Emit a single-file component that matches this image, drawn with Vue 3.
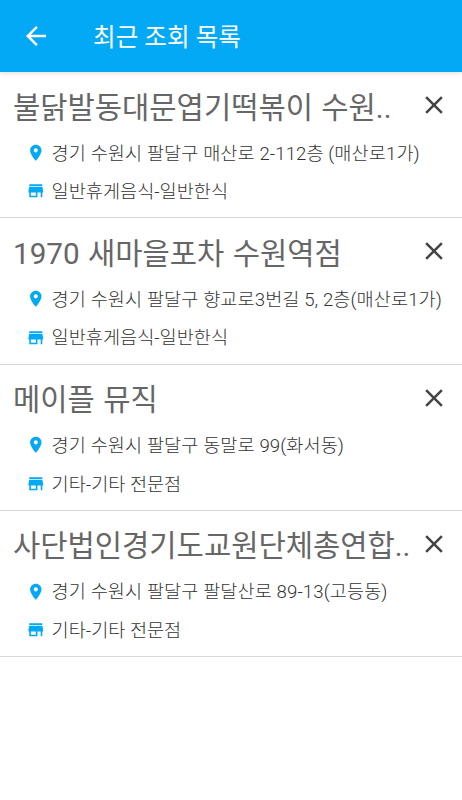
<template>
  <div class="page">
    <header class="toolbar">
      <button class="back" aria-label="뒤로">
        <svg viewBox="0 0 24 24"><path d="M20 11H7.83l5.59-5.59L12 4l-8 8 8 8 1.41-1.41L7.83 13H20v-2z"/></svg>
      </button>
      <h1>최근 조회 목록</h1>
    </header>
    <ul class="list">
      <li v-for="item in items" :key="item.id" class="item">
        <div class="head">
          <h2>{{ item.name }}</h2>
          <button class="remove" aria-label="삭제" @click="remove(item.id)">
            <svg viewBox="0 0 24 24"><path d="M19 6.41L17.59 5 12 10.59 6.41 5 5 6.41 10.59 12 5 17.59 6.41 19 12 13.41 17.59 19 19 17.59 13.41 12z"/></svg>
          </button>
        </div>
        <div class="row address">
          <svg viewBox="0 0 24 24"><path d="M12 2C8.13 2 5 5.13 5 9c0 5.25 7 13 7 13s7-7.75 7-13c0-3.87-3.13-7-7-7zm0 9.5c-1.38 0-2.5-1.12-2.5-2.5s1.12-2.5 2.5-2.5 2.5 1.12 2.5 2.5-1.12 2.5-2.5 2.5z"/></svg>
          <p>{{ item.address }}</p>
        </div>
        <div class="row">
          <svg viewBox="0 0 24 24"><path d="M20 4H4v2h16V4zm1 10v-2l-1-5H4l-1 5v2h1v6h10v-6h4v6h2v-6h1zm-9 4H6v-4h6v4z"/></svg>
          <p>{{ item.category }}</p>
        </div>
      </li>
    </ul>
  </div>
</template>

<script setup>
import {ref} from 'vue'

const items = ref([
  {id:1,name:'불닭발동대문엽기떡볶이 수원..',address:'경기 수원시 팔달구 매산로 2-112층 (매산로1가)',category:'일반휴게음식-일반한식'},
  {id:2,name:'1970 새마을포차 수원역점',address:'경기 수원시 팔달구 향교로3번길 5, 2층(매산로1가)',category:'일반휴게음식-일반한식'},
  {id:3,name:'메이플 뮤직',address:'경기 수원시 팔달구 동말로 99(화서동)',category:'기타-기타 전문점'},
  {id:4,name:'사단법인경기도교원단체총연합..',address:'경기 수원시 팔달구 팔달산로 89-13(고등동)',category:'기타-기타 전문점'}
])
const remove = (id)=>{
  items.value = items.value.filter(item => item.id !== id)
}
</script>

<style>
body {
  margin: 0;
  background: #fff;
}
</style>

<style scoped>
h1, h2, p, ul {margin: 0;padding: 0;font-weight: 400;}
button {
  padding: 0;
  border: none;
  background: transparent;
}
svg {
  display: block;
  fill: currentColor;
}
.page {
  min-height: 100vh;
  font-family: Roboto, "Noto Sans CJK KR", sans-serif;
  background: #fff;
}
.toolbar {
  display: flex;
  align-items: center;
  height: 72px;
  box-sizing: border-box;
  padding-left: 21px;
  color: #fff;
  background: #03a9f4;
  box-shadow: 0 1px 5px rgba(0,0,0,.14);
}
.back {
  color: #fff;
}
.back svg {
  width: 30px;
  height: 30px;
}
h1 {
  margin-left: 42px;
  padding-top: 3px;
  font-size: 24.6px;
  line-height: 36px;
  white-space: nowrap;
}
.list {
  list-style: none;
}
.item {
  height: 146.3px;
  box-sizing: border-box;
  border-bottom: 1px solid #d8d8d8;
}
.head {
  display: flex;
  align-items: center;
  justify-content: space-between;
  height: 66px;
  padding: 0 13px;
}
h2 {
  padding-top: 5px;
  font-size: 29.65px;
  line-height: 44px;
  word-spacing: 1px;
  color: #666;
  white-space: nowrap;
}
.remove {
  color: #444;
}
.remove svg {
  width: 30px;
  height: 30px;
}
.row {
  display: flex;
  align-items: center;
  height: 48px;
  padding-left: 25.5px;
  color: #03a9f4;
}
.row svg {
  flex: none;
  width: 19.6px;
  height: 19.6px;
}
.row p {
  margin-left: 6.5px;
  padding-top: 2px;
  font-size: 18.6px;
  font-weight: 300;
  line-height: 26px;
  color: #333;
  white-space: nowrap;
}
.row.address {
  height: 29px;
}
.row.address p {
  letter-spacing: .1px;
}
</style>
